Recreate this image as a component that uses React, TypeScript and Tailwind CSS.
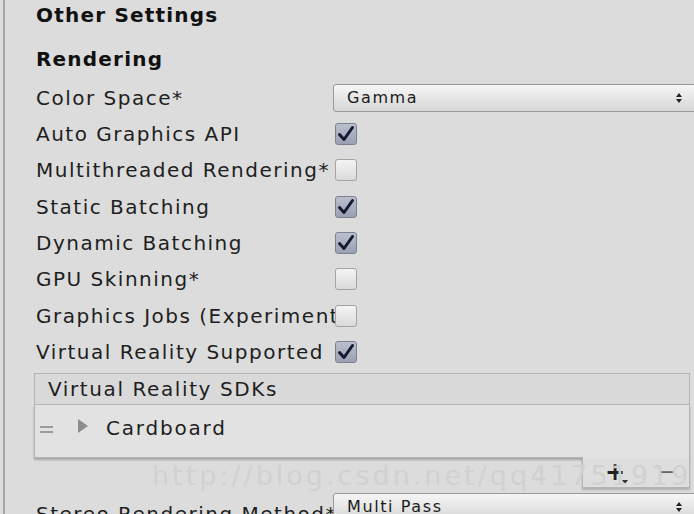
import React from "react";

const font = { fontFamily: '"DejaVu Sans", Verdana, sans-serif' };

function Check({ on }: { on: boolean }) {
  return (
    <div
      className={`w-[22px] h-[22px] shrink-0 rounded-[3px] border flex items-center justify-center ${
        on
          ? "border-[#7d8290] bg-gradient-to-b from-[#b9bfcc] to-[#9aa1b3]"
          : "border-[#a3a3a3] bg-gradient-to-b from-[#f4f4f4] to-[#dadada]"
      }`}
    >
      {on && (
        <svg width="18" height="18" viewBox="0 0 18 18">
          <path d="M2.5 9.5 L7 14.5 L15.5 2.5" fill="none" stroke="#141a33" strokeWidth="3" strokeLinecap="round" strokeLinejoin="round" />
        </svg>
      )}
    </div>
  );
}

function Row({ label, on }: { label: string; on: boolean }) {
  return (
    <div className="h-[36.3px] shrink-0 flex items-center">
      <div className="w-[299px] whitespace-nowrap overflow-hidden text-[20px] tracking-[1.5px] text-[#1e1e1e]">{label}</div>
      <Check on={on} />
    </div>
  );
}

function UpDown() {
  return (
    <svg width="8" height="12" viewBox="0 0 8 12">
      <path d="M4 1 L7 5 L1 5 Z" fill="#222" />
      <path d="M4 11 L7 7 L1 7 Z" fill="#222" />
    </svg>
  );
}

export default function App() {
  const rows: [string, boolean][] = [
    ["Auto Graphics API", true],
    ["Multithreaded Rendering*", false],
    ["Static Batching", true],
    ["Dynamic Batching", true],
    ["GPU Skinning*", false],
    ["Graphics Jobs (Experimental)*", false],
    ["Virtual Reality Supported", true],
  ];

  return (
    <div className="w-[694px] h-[514px] overflow-hidden bg-[#dcdcdc] flex" style={font}>
      {/* bordo sinistro */}
      <div className="w-[3px] shrink-0" />
      <div className="w-[2px] shrink-0 bg-[#a5a5a5]" />
      <div className="flex-1 flex flex-col pl-[31px]">
        <div className="h-[30px] shrink-0 flex items-center text-[20px] font-bold tracking-[1.2px] text-[#111]">Other Settings</div>
        <div className="h-[36px] shrink-0 mt-[11px] flex items-center text-[20px] font-bold tracking-[1.2px] text-[#111]">Rendering</div>

        {/* Color Space */}
        <div className="h-[36px] shrink-0 mt-[3px] flex items-center">
          <div className="w-[297px] text-[20px] tracking-[1.5px] text-[#1e1e1e]">Color Space*</div>
          <div className="flex-1 h-[28px] -mr-[14px] rounded-[3px] border border-[#9a9a9a] bg-gradient-to-b from-[#f6f6f6] to-[#d6d6d6] flex items-center pl-[13px] pr-[24px]">
            <span className="flex-1 text-[16px] tracking-[1.6px] text-[#1b1b1b]">Gamma</span>
            <UpDown />
          </div>
        </div>

        {rows.map(([l, on]) => (
          <Row key={l} label={l} on={on} />
        ))}

        {/* Virtual Reality SDKs */}
        <div className="relative shrink-0 mt-[3px] -ml-[2px] w-[656px]">
          <div className="h-[32px] border border-[#b4b4b4] bg-[#d9d9d9] flex items-center pl-[13px] text-[20px] tracking-[1.6px] text-[#1e1e1e]">
            Virtual Reality SDKs
          </div>
          <div className="h-[53px] border border-t-0 border-[#b4b4b4] bg-[#e2e2e2] shadow-[0_2px_2px_rgba(0,0,0,0.25)] flex items-start pt-[8px] pl-[5px]">
            <div className="flex flex-col gap-[3px] mt-[13px] w-[13px]">
              <div className="h-[2px] bg-[#9a9a9a]" />
              <div className="h-[2px] bg-[#9a9a9a]" />
            </div>
            <svg width="10" height="14" viewBox="0 0 10 14" className="ml-[25px] mt-[6px]">
              <path d="M0 0 L10 7 L0 14 Z" fill="#8c8c8c" />
            </svg>
            <span className="ml-[18px] text-[20px] tracking-[1.8px] text-[#1e1e1e]">Cardboard</span>
          </div>
          <div className="flex justify-end">
            <div className="w-[108px] h-[31px] -mt-[1px] border border-t-0 border-[#b4b4b4] bg-[#dedede] shadow-[0_2px_2px_rgba(0,0,0,0.2)] flex items-center pl-[22px] gap-[32px]">
              <div className="relative text-[24px] font-bold text-[#222] leading-none">
                +
                <svg width="6" height="4" viewBox="0 0 6 4" className="absolute -right-[3px] bottom-[0px]">
                  <path d="M0 0 L6 0 L3 4 Z" fill="#333" />
                </svg>
              </div>
              <div className="text-[22px] text-[#666] leading-none">−</div>
            </div>
          </div>
          {/* filigrana */}
          <div className="absolute left-[118px] top-[83px] text-[27px] tracking-[3px] text-[#d1d1d1] whitespace-nowrap pointer-events-none">
            http://blog.csdn.net/qq41751919
          </div>
        </div>

        {/* Stereo Rendering Method */}
        <div className="h-[36px] shrink-0 mt-[5px] flex items-start">
          <div className="w-[297px] pt-[6px] whitespace-nowrap overflow-hidden text-[20px] tracking-[1.5px] text-[#1e1e1e]">Stereo Rendering Method*</div>
          <div className="flex-1 h-[28px] -mr-[14px] rounded-[3px] border border-[#9a9a9a] bg-gradient-to-b from-[#f6f6f6] to-[#d6d6d6] flex items-center pl-[13px] pr-[24px]">
            <span className="flex-1 text-[16px] tracking-[1.6px] text-[#1b1b1b]">Multi Pass</span>
            <UpDown />
          </div>
        </div>
      </div>
    </div>
  );
}
